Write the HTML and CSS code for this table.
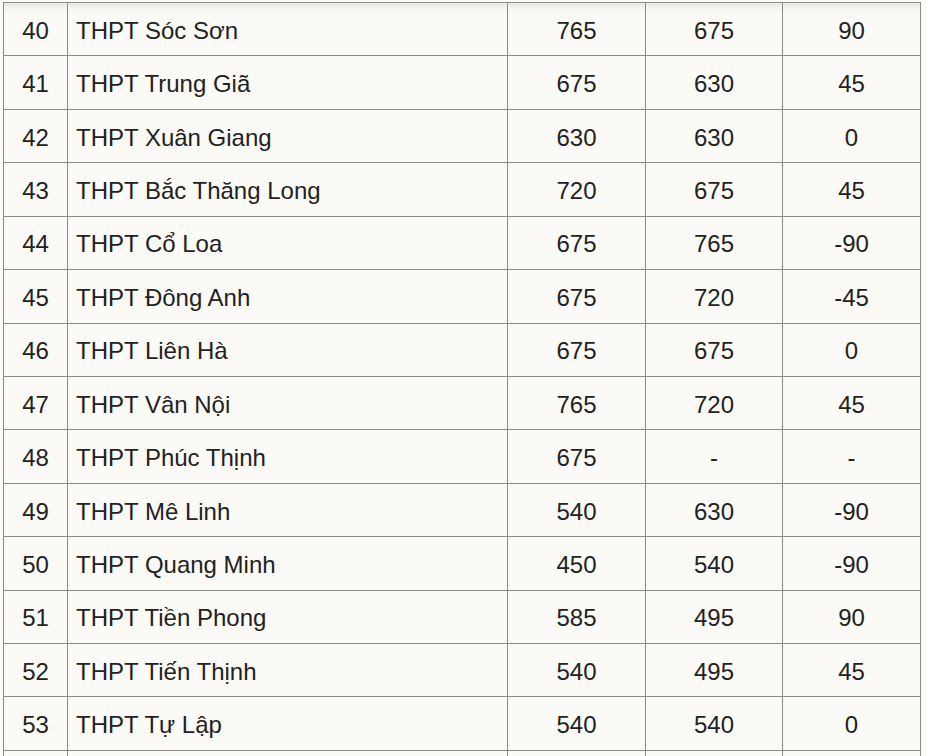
FILE: index.html
```html
<!DOCTYPE html>
<html lang="vi">
<head>
<meta charset="utf-8">
<title>Bảng điểm chuẩn</title>
<link rel="stylesheet" href="styles.css">
</head>
<body>
<div class="wrap">
<table class="scores">
<colgroup>
<col class="c-no"><col class="c-name"><col class="c-num"><col class="c-num2"><col class="c-num">
</colgroup>
<tbody>
<tr class="first"><td class="no">40</td><td class="name">THPT Sóc Sơn</td><td class="num">765</td><td class="num">675</td><td class="num">90</td></tr>
<tr><td class="no">41</td><td class="name">THPT Trung Giã</td><td class="num">675</td><td class="num">630</td><td class="num">45</td></tr>
<tr><td class="no">42</td><td class="name">THPT Xuân Giang</td><td class="num">630</td><td class="num">630</td><td class="num">0</td></tr>
<tr><td class="no">43</td><td class="name">THPT Bắc Thăng Long</td><td class="num">720</td><td class="num">675</td><td class="num">45</td></tr>
<tr><td class="no">44</td><td class="name">THPT Cổ Loa</td><td class="num">675</td><td class="num">765</td><td class="num">-90</td></tr>
<tr><td class="no">45</td><td class="name">THPT Đông Anh</td><td class="num">675</td><td class="num">720</td><td class="num">-45</td></tr>
<tr><td class="no">46</td><td class="name">THPT Liên Hà</td><td class="num">675</td><td class="num">675</td><td class="num">0</td></tr>
<tr><td class="no">47</td><td class="name">THPT Vân Nội</td><td class="num">765</td><td class="num">720</td><td class="num">45</td></tr>
<tr><td class="no">48</td><td class="name">THPT Phúc Thịnh</td><td class="num">675</td><td class="num">-</td><td class="num">-</td></tr>
<tr><td class="no">49</td><td class="name">THPT Mê Linh</td><td class="num">540</td><td class="num">630</td><td class="num">-90</td></tr>
<tr><td class="no">50</td><td class="name">THPT Quang Minh</td><td class="num">450</td><td class="num">540</td><td class="num">-90</td></tr>
<tr><td class="no">51</td><td class="name">THPT Tiền Phong</td><td class="num">585</td><td class="num">495</td><td class="num">90</td></tr>
<tr><td class="no">52</td><td class="name">THPT Tiến Thịnh</td><td class="num">540</td><td class="num">495</td><td class="num">45</td></tr>
<tr><td class="no">53</td><td class="name">THPT Tự Lập</td><td class="num">540</td><td class="num">540</td><td class="num">0</td></tr>
<tr><td class="no"></td><td class="name"></td><td class="num"></td><td class="num"></td><td class="num"></td></tr>
</tbody>
</table>
</div>
</body>
</html>
```
FILE: styles.css
```css
html, body {
  margin: 0;
  padding: 0;
  background: #fbfaf6;
  overflow: hidden;
}
.wrap {
  padding: 2px 0 0 3px;
}
.scores {
  border-collapse: collapse;
  table-layout: fixed;
  width: 918px;
  font-family: "Liberation Sans", Arial, sans-serif;
  font-size: 24px;
  color: #222;
}
.c-no { width: 64px; }
.c-name { width: 440px; }
.c-num { width: 138px; }
.c-num2 { width: 137px; }
.scores td {
  border: 1px solid #8a8a88;
  height: 49.43px;
  padding: 3px 0 0 0;
  vertical-align: middle;
  line-height: 1;
}
.scores tr.first td {
  background: linear-gradient(#e4e4e2 0, #f3f3f0 4px, #fbfaf6 10px);
}
.no, .num { text-align: center; }
.scores td.name { padding-left: 8px; text-align: left; }
```
